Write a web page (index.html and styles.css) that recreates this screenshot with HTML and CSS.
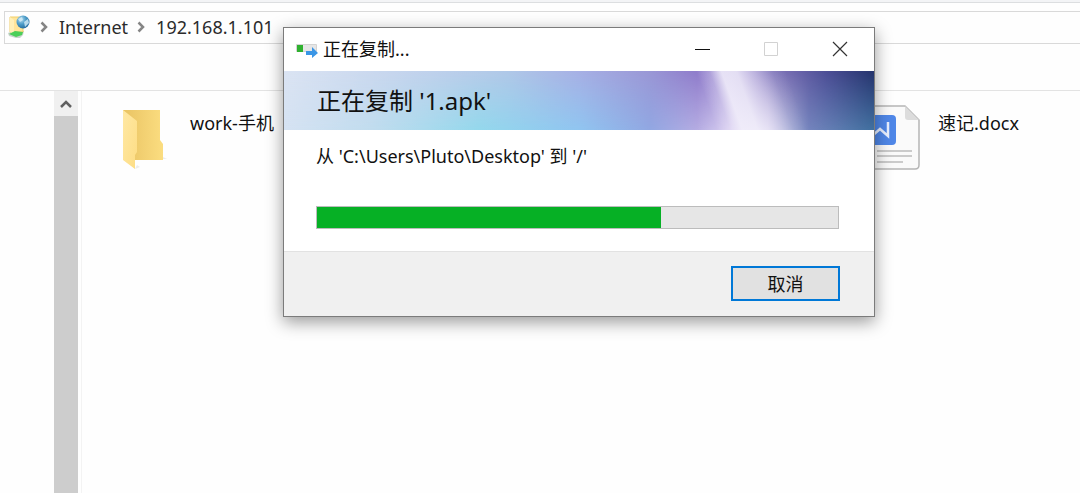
FILE: index.html
```
<!DOCTYPE html>
<html lang="zh-CN">
<head>
<meta charset="utf-8">
<title>192.168.1.101</title>
<link rel="stylesheet" href="styles.css">
</head>
<body>
<div class="explorer">
  <header class="toolbar">
    <nav class="address" aria-label="地址">
      <svg class="address-icon" width="24" height="24" viewBox="0 0 24 24" aria-hidden="true">
        <defs>
          <radialGradient id="globe" cx=".35" cy=".3" r=".75"><stop offset="0" stop-color="#b5dcef"/><stop offset=".5" stop-color="#4c9cc8"/><stop offset="1" stop-color="#22699c"/></radialGradient>
        </defs>
        <path d="M1 18l5-2h11l-1 4-3 3H9L2 21z" fill="#c9d2cc"/>
        <path d="M3 2h13v15H3z" fill="#ffe59a" stroke="#f1cf68"/>
        <path d="M3 2l4 3v14l-4-2z" fill="#fff0b8"/>
        <path d="M2 19l6-3 8 1-1 3-6 2z" fill="#4bcf58"/>
        <circle cx="16" cy="7" r="6.5" fill="url(#globe)"/>
        <path d="M11 4l4-2 1 3-3 2zM17 7l4-3 1 4-4 4z" fill="#d4eef8" opacity=".8"/>
      </svg>
      <svg class="chevron" width="8" height="12" viewBox="0 0 8 12" aria-hidden="true"><path d="M1.5 1.5L6 6l-4.5 4.5"/></svg>
      <a class="crumb" href="#internet">Internet</a>
      <svg class="chevron" width="8" height="12" viewBox="0 0 8 12" aria-hidden="true"><path d="M1.5 1.5L6 6l-4.5 4.5"/></svg>
      <a class="crumb" href="#host">192.168.1.101</a>
    </nav>
  </header>
  <div class="content">
    <aside class="tree">
      <div class="scrollbar">
        <button class="scroll-up" type="button" aria-label="向上滚动">
          <svg width="12" height="10" viewBox="0 0 12 10" aria-hidden="true"><path d="M1 8l5-5 5 5" fill="none" stroke="#606060" stroke-width="2.5"/></svg>
        </button>
        <div class="scroll-thumb"></div>
      </div>
    </aside>
    <main class="files">
      <a class="file" href="#work">
        <svg class="file-icon" width="64" height="66" viewBox="0 0 64 66" aria-hidden="true">
          <defs>
            <linearGradient id="back"><stop offset="0" stop-color="#e9c363"/><stop offset="1" stop-color="#fbdd80"/></linearGradient>
            <linearGradient id="front" y2="1" x2="1"><stop offset="0" stop-color="#ffe8a4"/><stop offset="1" stop-color="#fddd84"/></linearGradient>
          </defs>
          <path d="M24 64l5-2-3-2zM52 54h4l-4-2z" fill="#ececec"/>
          <path d="M12 5h37v30l3 4v16H20L12 48z" fill="url(#back)"/>
          <path d="M12 5l14 11v31l-2 3v14l-12-9z" fill="url(#front)"/>
        </svg>
        <span>work-手机</span>
      </a>
      <a class="file file-last" href="#notes">
        <svg class="file-icon" width="64" height="66" viewBox="0 0 64 66" aria-hidden="true">
          <path d="M6 1h40l14 14v45q0 4-4 4H6q-3 0-3-4V4q0-3 3-3z" fill="#fafafa" stroke="#b5b5b5" stroke-width="1.5"/>
          <path d="M46 1l14 14H49q-3 0-3-3z" fill="#dcdcdc"/>
          <rect x="4" y="10" width="33" height="30" rx="4" fill="#4f87e8"/>
          <path d="M13 17v14l8-7 8 7V17" fill="none" stroke="#e8f0ff" stroke-width="2.5"/>
          <path d="M18 46h35M18 51h35M18 57h26" stroke="#cbcbcb" stroke-width="2"/>
        </svg>
        <span>速记.docx</span>
      </a>
    </main>
  </div>
</div>

<section class="dialog" role="dialog" aria-labelledby="dialog-title">
  <header class="titlebar">
    <svg class="copy-icon" width="24" height="18" viewBox="0 0 24 18" aria-hidden="true">
      <path d="M1.5 4.500h20v7h-20z" fill="#e6e6e6" stroke="#d4d4d4"/>
      <path d="M2 5h6v7H2z" fill="#2fb12f"/>
      <path d="M11 11h6V7l6 6-6 5v-3h-6z" fill="#3a96e6"/>
    </svg>
    <span class="title" id="dialog-title">正在复制...</span>
    <button class="window-button" type="button" aria-label="最小化">
      <svg width="16" height="16" viewBox="0 0 16 16" aria-hidden="true"><path d="M1 8.5h15" stroke="#111"/></svg>
    </button>
    <button class="window-button" type="button" aria-label="最大化" disabled>
      <svg width="16" height="16" viewBox="0 0 16 16" aria-hidden="true"><path d="M1.5 1.5h13v13h-13z" fill="none" stroke="#d2d2d2"/></svg>
    </button>
    <button class="window-button" type="button" aria-label="关闭">
      <svg width="16" height="16" viewBox="0 0 16 16" aria-hidden="true"><path d="M1 1l14 14M15 1L1 15" stroke="#333" stroke-width="1.2"/></svg>
    </button>
  </header>
  <div class="banner">
    <svg class="banner-art" viewBox="0 0 590 58" preserveAspectRatio="none" aria-hidden="true">
      <defs>
        <linearGradient id="sky" gradientUnits="userSpaceOnUse" x1="0" x2="590">
          <stop offset="0" stop-color="#dbe4f3"/><stop offset=".22" stop-color="#c3d3ed"/><stop offset=".38" stop-color="#b0c8e8"/><stop offset=".5" stop-color="#a7b0e5"/><stop offset=".62" stop-color="#9a97d6"/><stop offset=".7" stop-color="#8f7ccb"/><stop offset=".76" stop-color="#a596d6"/><stop offset=".86" stop-color="#7068ae"/><stop offset=".92" stop-color="#4c4e96"/><stop offset="1" stop-color="#25346d"/>
        </linearGradient>
        <linearGradient id="low" gradientUnits="userSpaceOnUse" x1="0" x2="590">
          <stop offset="0" stop-color="#d5e2f2"/><stop offset=".15" stop-color="#c0dcee"/><stop offset=".33" stop-color="#94d8ec"/><stop offset=".5" stop-color="#90c5f0"/><stop offset=".62" stop-color="#91a7e2"/><stop offset=".7" stop-color="#b5ace2"/><stop offset=".76" stop-color="#ddd3f2"/><stop offset=".82" stop-color="#dedbf0"/><stop offset=".89" stop-color="#7484bd"/><stop offset="1" stop-color="#40709f"/>
        </linearGradient>
        <linearGradient id="beam" gradientUnits="userSpaceOnUse" x1="412" x2="502" gradientTransform="skewX(20)">
          <stop offset="0" stop-color="#f3f0fb" stop-opacity="0"/><stop offset=".15" stop-color="#f3f0fb" stop-opacity=".25"/><stop offset=".28" stop-color="#f3f0fb" stop-opacity=".85"/><stop offset=".45" stop-color="#f3f0fb" stop-opacity=".8"/><stop offset=".65" stop-color="#e6dff5" stop-opacity=".5"/><stop offset=".85" stop-color="#d9d3ef" stop-opacity=".12"/><stop offset="1" stop-color="#d9d3ef" stop-opacity="0"/>
        </linearGradient>
        <linearGradient id="fade" x2="0" y2="1"><stop offset="0" stop-color="#000"/><stop offset="1" stop-color="#fff"/></linearGradient>
        <mask id="lower"><path d="M0 0h590v58H0z" fill="url(#fade)"/></mask>
      </defs>
      <path d="M0 0h590v58H0z" fill="url(#sky)"/>
      <path d="M0 0h590v58H0z" fill="url(#low)" mask="url(#lower)"/>
      <path d="M0 0h590v58H0z" fill="url(#beam)"/>
    </svg>
    <h1 class="heading">正在复制 '1.apk'</h1>
  </div>
  <div class="dialog-body">
    <label class="route" for="copy-progress">从 'C:\Users\Pluto\Desktop' 到 '/'</label>
    <progress class="progress" id="copy-progress" value="66" max="100"></progress>
  </div>
  <footer class="dialog-footer">
    <button class="cancel" type="button">取消</button>
  </footer>
</section>
</body>
</html>
```
FILE: styles.css
```
* { box-sizing: border-box; }

body {
  margin: 0;
  background: #fefefe;
  color: #111;
  font: 18px/24px "Noto Sans", "Noto Sans CJK SC", sans-serif;
}

a { color: inherit; text-decoration: none; }

.explorer {
  display: flex;
  flex-direction: column;
  min-height: 100vh;
}

.toolbar {
  padding: 11px 0 46px 4px;
  border-bottom: 1px solid #e3e3e3;
  background: linear-gradient(#f3f4f6 2px, #dcdee0 2px, #dcdee0 3px, transparent 3px);
}

.address {
  display: flex;
  align-items: center;
  height: 33px;
  border: 1px solid #d9d9d9;
  border-right: 0;
  padding: 0 0 2px 2px;
}

.address-icon { margin-right: 9px; }

.chevron {
  margin-right: 11px;
  fill: none;
  stroke: #858585;
  stroke-width: 2.5;
}

.crumb { color: #2b2b2b; }
.crumb + .chevron { margin-left: 9px; }

.content { display: flex; flex: 1; }

.tree {
  display: flex;
  flex-shrink: 0;
  justify-content: flex-end;
  width: 82px;
  padding-right: 3px;
  border-right: 1px solid #f3f3f3;
}

.scrollbar {
  display: flex;
  flex-direction: column;
  width: 24px;
  background: #f0f0f0;
}

.scroll-up {
  display: grid;
  place-items: center;
  height: 25px;
  padding: 0;
  border: 0;
  background: #f0f0f0;
}

.scroll-thumb { flex: 1; background: #cdcdcd; }

.files {
  display: grid;
  grid-template-columns: 374px 374px 1fr;
  flex: 1;
  align-content: start;
  padding: 14px 0 0 29px;
}

.file { display: flex; gap: 15px; }
.file span { padding-top: 6px; }
.file-last { grid-column: 3; }

.dialog {
  position: absolute;
  top: 27px;
  left: 283px;
  width: 592px;
  border: 1px solid #7b7b7b;
  background: #fff;
  box-shadow: 0 5px 16px rgba(0, 0, 0, .4);
}

.titlebar {
  display: flex;
  align-items: center;
  height: 43px;
  padding: 0 0 2px 11px;
}

.copy-icon { margin-right: 4px; }
.title { flex: 1; }

.window-button {
  display: grid;
  place-items: center;
  width: 69px;
  height: 100%;
  padding: 0;
  border: 0;
  background: none;
}

.banner {
  display: grid;
  align-items: center;
  height: 59px;
}

.banner-art,
.heading { grid-area: 1 / 1; }

.banner-art { width: 100%; height: 59px; }

.heading {
  z-index: 1;
  margin: 0;
  padding-left: 33px;
  font-size: 24px;
  font-weight: 400;
  line-height: 32px;
}

.dialog-body {
  display: flex;
  flex-direction: column;
  gap: 38px;
  padding: 14px 35px 22px 32px;
}

.progress {
  width: 100%;
  height: 23px;
  border: 1px solid #bcbcbc;
  background: #e6e6e6;
  appearance: none;
}

.progress::-webkit-progress-bar { background: #e6e6e6; }
.progress::-webkit-progress-value { background: #06b025; }

.dialog-footer {
  display: flex;
  justify-content: flex-end;
  padding: 14px 34px 15px;
  border-top: 1px solid #e2e2e2;
  background: #f0f0f0;
}

.cancel {
  width: 109px;
  height: 35px;
  padding: 0;
  border: 2px solid #0078d7;
  background: #e1e1e1;
  color: #111;
  font: inherit;
}
```
